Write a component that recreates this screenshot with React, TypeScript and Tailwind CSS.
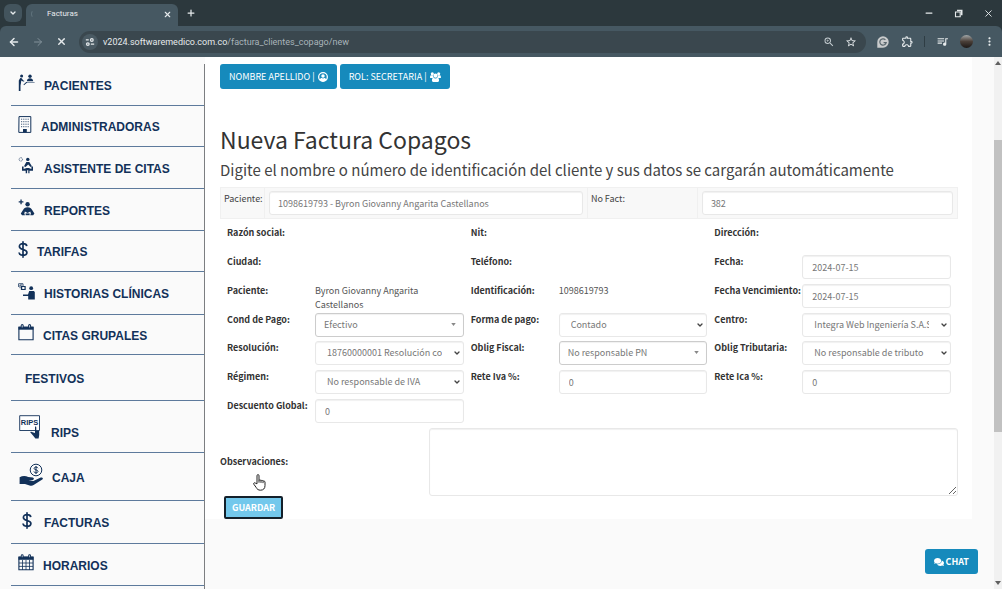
import type { ReactNode } from 'react';
import { ArrowLeft, ArrowRight, ChevronDown, Minus, Plus, X } from 'lucide-react';
import { FaComments } from 'react-icons/fa';
import {
  MdMoreVert,
  MdOutlineExtension,
  MdQueueMusic,
  MdStarBorder,
  MdZoomIn,
} from 'react-icons/md';

/* ---------- Sidebar icons ---------- */

function PatientIcon() {
  return (
    <svg viewBox="0 0 17 17" className="h-[17px] w-[17px]" fill="currentColor">
      <circle cx="3.6" cy="2" r="1.5" />
      <path d="M2.2 4 .8 6.500V17h1.700v-5.500L3 9l.3-2.600 1.700 1.200 1.300-.2-.2-.8-.9-.1L3.800 4.200Z" />
      <circle cx="12" cy="2.2" r="1.7" />
      <path d="M8.800 7.200c.4-2.200 1.400-3 3.200-3s2.800.8 3.200 3Z" />
      <path d="M8.200 7.900h8.400v.7H9.200l-3.200 2.600-.5-.6Z" />
    </svg>
  );
}

function BuildingIcon() {
  return (
    <svg viewBox="0 0 14 17" className="h-[17px] w-[14px]">
      <path d="M1 .6h11.8v15.8H.8Z" fill="#fff" stroke="currentColor" strokeWidth="1" />
      <path d="M3 3.200h8M3 5.700h8M3 8.200h8M3 10.700h8" stroke="currentColor" strokeWidth="1" strokeDasharray="1.200 1" opacity=".8" />
      <path d="M5 13h3.800v3.400H5Z" fill="currentColor" />
    </svg>
  );
}

function AssistantIcon() {
  return (
    <svg viewBox="0 0 17 17" className="h-[17px] w-[17px]" fill="currentColor">
      <circle cx="2.800" cy="2.400" r="1.700" fill="none" stroke="currentColor" strokeWidth=".7" strokeDasharray="1 .5" />
      <circle cx="9.800" cy="2.400" r="1.700" />
      <path d="M6 9.300 8.300 5h3l2.600 4.300-1.300.8-2.400-2.600-2.700 2.600Z" />
      <path d="M4 9.500h1.600V12l3-1h2.200l2.600 1V9.500H15v4.300h-3.500v2.400h-1.200v-2.900H9.100v2.900H7.700v-2.400H4Z" />
    </svg>
  );
}

function ReportIcon() {
  return (
    <svg viewBox="0 0 17 17" className="h-[17px] w-[17px]" fill="currentColor">
      <path d="M2.400.6h1.300v1.700h1.700v1.300H3.700v1.700H2.400V3.600H.7V2.300h1.700Z" />
      <circle cx="9.600" cy="5.200" r="2.200" />
      <path d="M9.600 8.200c2.600 0 3.500.8 4.400 2.600l2.400 3.600-1.200 1.800h-3l.7-1.600-.6-2-2.700 1.400-2.700-1.400-.6 2 .7 1.600H4L2.800 14.400l2.400-3.600c.9-1.800 1.800-2.600 4.400-2.600Z" />
      <path d="M7.600 14.400h4v1.800h-4Z" />
    </svg>
  );
}

function DollarIcon({ className }: { className: string }) {
  return (
    <svg viewBox="0 0 10 17" className={className} fill="none" stroke="currentColor" strokeWidth="1.700">
      <path d="M8.800 5.200C8.600 3.600 7.200 2.700 5 2.700S1.400 3.700 1.400 5.500c0 4 7.500 2 7.500 6 0 1.800-1.600 2.800-3.900 2.800S1.200 13.300 1 11.500M5 .3v16.400" />
    </svg>
  );
}

function HistoryIcon() {
  return (
    <svg viewBox="0 0 18 17" className="h-[17px] w-[18px]" fill="currentColor">
      <path d="M.6 4V.7h4.600M2 5.200V2h4" fill="none" stroke="currentColor" strokeWidth=".8" />
      <path d="M2.900 3h4.800v4H2.900Zm1.300 1v2h2.300V4Z" fillRule="evenodd" />
      <circle cx="13.200" cy="5.200" r="1.900" />
      <path d="M11.200 8h4.600l1 1v7.500h-6.600v-3.600H5v-1.400h5Z" />
    </svg>
  );
}

function CalendarIcon() {
  return (
    <svg viewBox="0 0 16 17" className="h-[17px] w-[16px]">
      <path d="M.9 3.200h14.200v12.600H.9Z" fill="none" stroke="currentColor" strokeWidth="1.100" />
      <path d="M.5 2.700h15v3H.5Z" fill="currentColor" />
      <path d="M4.200 1.600v2M11.600 1.600v2" stroke="currentColor" strokeWidth="3" strokeLinecap="round" />
      <path d="M4.200 1.200v2.200M11.600 1.200v2.200" stroke="#fff" strokeWidth=".8" />
    </svg>
  );
}

function ScheduleIcon() {
  return (
    <svg viewBox="0 0 16 17" className="h-[17px] w-[16px]">
      <path d="M.9 3.200h14.200v12.600H.9Z" fill="none" stroke="currentColor" strokeWidth="1.100" />
      <path d="M.5 2.500h15v3.300H.5Z" fill="currentColor" />
      <path d="M4.200 1.600v2M11.600 1.600v2" stroke="currentColor" strokeWidth="2.800" strokeLinecap="round" />
      <path d="M4.200 1.200v2M11.600 1.200v2" stroke="#fff" strokeWidth=".7" />
      <path d="M4.500 6v10M8 6v10M11.500 6v10M1 9h14M1 12.400h14" stroke="currentColor" strokeWidth=".8" />
    </svg>
  );
}

function RipsIcon() {
  return (
    <svg viewBox="0 0 22 24" className="h-[24px] w-[22px]">
      <path d="M.7.7h19.800v14.800H.7Z" fill="#fff" stroke="currentColor" strokeWidth=".9" />
      <text x="10.600" y="10" fontSize="7.500" fontWeight="700" textAnchor="middle" fill="currentColor" fontFamily="Liberation Sans, sans-serif">
        RIPS
      </text>
      <path d="M16 11.700c.8-.3 1.300 0 1.300.8v3.500h2.900v4l-.6 3.500h-3.200l-2.200-2.800-3-3.400c.6-.8 1.600-.6 2.400 0l2.400.700Z" fill="currentColor" />
    </svg>
  );
}

function CashIcon() {
  return (
    <svg viewBox="0 0 25 24" className="h-[24px] w-[25px]">
      <circle cx="17" cy="7" r="5.800" fill="none" stroke="currentColor" strokeWidth="1" />
      <path d="M19 5.200c-.3-.8-1-1.100-2-1.100s-1.900.4-1.900 1.300c0 2 3.900 1 3.900 3 0 .9-.9 1.400-2 1.400s-1.900-.4-2.100-1.300M17 3v8" fill="none" stroke="currentColor" strokeWidth="1" />
      <path d="M.6 14.300c2.600-1.500 5.800-1.700 8.600-.4l4.600.7c1.500.3 1.500 2.300-.1 2.400l-4.200.3 4.900.6 7.300-3.300c1.700-.7 3 .7 1.600 2L14.600 22c-1.200.8-2.600.9-4 .4L6 20.900H.6Z" fill="currentColor" />
    </svg>
  );
}

/* ---------- Sidebar ---------- */

type NavItem = { label: string; icon?: ReactNode; row: string; text: string };

const navItems: NavItem[] = [
  { label: 'PACIENTES', icon: <PatientIcon />, row: 'h-[42px] items-center pl-[7px]', text: 'ml-[9px]' },
  { label: 'ADMINISTRADORAS', icon: <BuildingIcon />, row: 'h-[41px] items-center pl-[7px]', text: 'ml-[9px]' },
  { label: 'ASISTENTE DE CITAS', icon: <AssistantIcon />, row: 'h-[42px] items-center pl-[7px]', text: 'ml-[9px]' },
  { label: 'REPORTES', icon: <ReportIcon />, row: 'h-[42px] items-center pl-[7px]', text: 'ml-[9px]' },
  { label: 'TARIFAS', icon: <DollarIcon className="h-[17px] w-[10px]" />, row: 'h-[41px] items-center pl-[7px]', text: 'ml-[9px]' },
  { label: 'HISTORIAS CLÍNICAS', icon: <HistoryIcon />, row: 'h-[43px] items-center pl-[7px]', text: 'ml-[8px]' },
  { label: 'CITAS GRUPALES', icon: <CalendarIcon />, row: 'h-[40px] items-center pl-[7px]', text: 'ml-[9px]' },
  { label: 'FESTIVOS', row: 'h-[46px] items-center pl-[14px]', text: '' },
  { label: 'RIPS', icon: <RipsIcon />, row: 'h-[52px] items-end pl-[8px] pb-[9px]', text: 'ml-[10px]' },
  { label: 'CAJA', icon: <CashIcon />, row: 'h-[48px] items-center pl-[8px]', text: 'ml-[8px]' },
  { label: 'FACTURAS', icon: <DollarIcon className="h-[17px] w-[12px]" />, row: 'h-[43px] items-center pl-[10px]', text: 'ml-[11px]' },
  { label: 'HORARIOS', icon: <ScheduleIcon />, row: 'h-[42px] items-center pl-[7px]', text: 'ml-[9px]' },
];

function Sidebar() {
  return (
    <aside className="mt-[7px] w-[205px] shrink-0 border-r border-[#7c7e81] pl-[11px]">
      <nav aria-label="Menú principal">
        <ul>
          {navItems.map((item) => (
            <li key={item.label}>
              <a
                href="#"
                className={`flex border-b border-[#5d7a9c] font-['Liberation_Sans',sans-serif] text-[12px] leading-[20px] font-bold text-[#123159] ${item.row}`}
              >
                {item.icon && <span className="mb-1 shrink-0">{item.icon}</span>}
                <span className={`mt-[2px] ${item.text}`}>{item.label}</span>
              </a>
            </li>
          ))}
        </ul>
      </nav>
    </aside>
  );
}

/* ---------- Browser frame ---------- */

function SiteSettingsIcon() {
  return (
    <svg viewBox="0 0 12 12" className="h-[10px] w-[10px]" fill="none" stroke="currentColor" strokeWidth="1.500">
      <path d="M1 3.500h3.500M7 8.500h4" />
      <circle cx="8.200" cy="3.500" r="1.600" />
      <circle cx="3.400" cy="8.500" r="1.600" />
    </svg>
  );
}

function RestoreIcon() {
  return (
    <svg viewBox="0 0 9 9" className="h-[9px] w-[9px]" fill="none" stroke="currentColor" strokeWidth="1.100">
      <path d="M1.500 3h4.700v4.700H1.500Z" />
      <path d="M3 1.500h4.700v4.700" strokeWidth="1.600" />
    </svg>
  );
}

function GrammarIcon() {
  return (
    <svg viewBox="0 0 12 12" className="h-[12px] w-[12px]">
      <path d="M6 .3a5.700 5.700 0 1 1 0 11.400H.3V6A5.700 5.700 0 0 1 6 .3Z" fill="#c9cbcc" />
      <path d="M8.400 3.800A3.200 3.200 0 1 0 9.200 6.600H6.600" fill="none" stroke="#59666d" strokeWidth="1.200" />
    </svg>
  );
}

function BrowserFrame() {
  return (
    <header className="shrink-0 bg-[#2c383d] font-['Roboto',sans-serif] text-[#e6eaec]">
      <div className="flex h-[26px] items-center pl-1">
        <button type="button" aria-label="Buscar pestañas" className="grid h-[18px] w-[18px] place-items-center rounded-md bg-[#43545d]">
          <ChevronDown size={8} strokeWidth={4} />
        </button>
        <div className="ml-1 flex h-[22px] w-[152px] items-center self-end rounded-t-md bg-[#465862] pr-[6px] pb-[2px] pl-[5px]">
          <span className="h-2 w-2 rounded-full border border-transparent border-l-[#5f727c]" />
          <span className="ml-2 flex-1 text-[8px] leading-[12px]">Facturas</span>
          <button type="button" aria-label="Cerrar pestaña">
            <X size={9} strokeWidth={3} />
          </button>
        </div>
        <button type="button" aria-label="Nueva pestaña" className="ml-2">
          <Plus size={10} strokeWidth={3} />
        </button>
        <div className="ml-auto flex items-center gap-5 pr-2">
          <button type="button" aria-label="Minimizar">
            <Minus size={10} strokeWidth={3} />
          </button>
          <button type="button" aria-label="Restaurar">
            <RestoreIcon />
          </button>
          <button type="button" aria-label="Cerrar">
            <X size={11} strokeWidth={2} />
          </button>
        </div>
      </div>
      <div className="flex h-[31px] items-center rounded-t-md bg-[#465862] pl-2">
        <div className="flex w-[71px] items-center gap-3">
          <button type="button" aria-label="Atrás">
            <ArrowLeft size={12} strokeWidth={3} />
          </button>
          <button type="button" aria-label="Adelante" className="text-[#82919a]">
            <ArrowRight size={12} strokeWidth={2} />
          </button>
          <button type="button" aria-label="Detener">
            <X size={11} strokeWidth={3} />
          </button>
        </div>
        <div className="flex h-[22px] flex-1 items-center rounded-full bg-[#3a474e] pr-[9px] pl-[3px]">
          <span className="grid h-4 w-4 place-items-center rounded-full bg-[#4a5a63]">
            <SiteSettingsIcon />
          </span>
          <span className="ml-[5px] flex-1 text-[9px] leading-[14px] text-[#a9b4ba]">
            <span className="text-[#e6eaec]">v2024.softwaremedico.com.co</span>/factura_clientes_copago/new
          </span>
          <MdZoomIn size={12} className="text-[#c3cbcf]" />
          <MdStarBorder size={12} className="ml-[10px]" />
        </div>
        <div className="ml-[11px] flex items-center">
          <GrammarIcon />
          <MdOutlineExtension size={13} className="ml-3" />
          <span className="ml-[10px] h-[11px] w-px bg-[#2f3d44]" />
          <MdQueueMusic size={13} className="ml-[11px]" />
          <span className="ml-[11px] h-[13px] w-[13px] rounded-full bg-linear-to-b from-[#a3a9ab] via-[#4a3f38] to-[#1d1816]" />
          <MdMoreVert size={13} className="mr-[6px] ml-[10px]" />
        </div>
      </div>
    </header>
  );
}

/* ---------- Form ---------- */

const control =
  'block h-6 w-full rounded-[3px] border bg-white text-[9px] leading-[14px] text-[#777] shadow-[inset_0_1px_1px_rgba(0,0,0,0.06)] outline-none';

type FieldProps = {
  id: string;
  label: string;
  kind?: 'static' | 'input' | 'select' | 'picker';
  value?: string;
};

function FieldControl({ id, kind, value }: FieldProps) {
  if (kind === 'input') {
    return <input id={id} type="text" defaultValue={value} className={`${control} border-[#e8e8e8] px-[9px]`} />;
  }
  if (kind === 'select') {
    return (
      <div className="relative">
        <select id={id} className={`${control} appearance-none border-[#e8e8e8] pr-[21px] pl-[11px]`}>
          <option>{value}</option>
        </select>
        <ChevronDown size={8} strokeWidth={4} className="pointer-events-none absolute top-2 right-[3px] text-[#444]" />
      </div>
    );
  }
  if (kind === 'picker') {
    return (
      <div className="relative">
        <select id={id} className={`${control} appearance-none border-[#cccccc] pr-5 pl-2`}>
          <option>{value}</option>
        </select>
        <svg viewBox="0 0 6 4" className="pointer-events-none absolute top-[10px] right-2 h-[3px] w-[5px]">
          <path d="M0 0h6L3 4Z" fill="#888" />
        </svg>
      </div>
    );
  }
  return (
    <output id={id} className="block text-[9px] leading-[14px] text-[#555]">
      {value}
    </output>
  );
}

function Field(props: FieldProps) {
  return (
    <div className="grid grid-cols-[88px_1fr] pl-[7px]">
      <label htmlFor={props.id} className="text-[9px] leading-[14px] font-bold whitespace-nowrap text-[#333]">
        {props.label}
      </label>
      <FieldControl {...props} />
    </div>
  );
}

const fields: FieldProps[] = [
  { id: 'razon', label: 'Razón social:' },
  { id: 'nit', label: 'Nit:' },
  { id: 'direccion', label: 'Dirección:' },
  { id: 'ciudad', label: 'Ciudad:' },
  { id: 'telefono', label: 'Teléfono:' },
  { id: 'fecha', label: 'Fecha:', kind: 'input', value: '2024-07-15' },
  { id: 'paciente', label: 'Paciente:', value: 'Byron Giovanny Angarita Castellanos' },
  { id: 'identificacion', label: 'Identificación:', value: '1098619793' },
  { id: 'vencimiento', label: 'Fecha Vencimiento:', kind: 'input', value: '2024-07-15' },
  { id: 'cond', label: 'Cond de Pago:', kind: 'picker', value: 'Efectivo' },
  { id: 'forma', label: 'Forma de pago:', kind: 'select', value: 'Contado' },
  { id: 'centro', label: 'Centro:', kind: 'select', value: 'Integra Web Ingeniería S.A.S.' },
  { id: 'resolucion', label: 'Resolución:', kind: 'select', value: '18760000001 Resolución con' },
  { id: 'fiscal', label: 'Oblig Fiscal:', kind: 'picker', value: 'No responsable PN' },
  { id: 'tributaria', label: 'Oblig Tributaria:', kind: 'select', value: 'No responsable de tributo' },
  { id: 'regimen', label: 'Régimen:', kind: 'select', value: 'No responsable de IVA' },
  { id: 'iva', label: 'Rete Iva %:', kind: 'input', value: '0' },
  { id: 'ica', label: 'Rete Ica %:', kind: 'input', value: '0' },
  { id: 'descuento', label: 'Descuento Global:', kind: 'input', value: '0' },
];

function HandCursor() {
  return (
    <svg viewBox="0 0 13 17" className="pointer-events-none absolute -top-[22px] left-[33px] h-[17px] w-[13px]" fill="#fff" stroke="#222" strokeWidth="1" strokeLinejoin="round">
      <path d="M4 9.800V1.700C4 .2 6 .2 6 1.700v4.800c.2-1 1.900-.8 2 .3.300-.9 1.900-.6 2 .5.500-.7 1.900-.4 2 .8v3.400c0 3-1.600 4.700-4.500 4.700-2.300 0-3.400-1-4.300-2.700L.8 10.200c-.6-1.100.6-1.900 1.500-1.100Z" />
      <path d="M6 6.500v2.200M8 6.900v2M10 7.400v1.700" fill="none" />
    </svg>
  );
}

function UserCircleIcon() {
  return (
    <svg viewBox="0 0 12 12" className="h-[10px] w-[10px]">
      <circle cx="6" cy="6" r="5.200" fill="none" stroke="currentColor" strokeWidth="1.500" />
      <circle cx="6" cy="4.900" r="2.100" fill="currentColor" />
      <path d="M2 9.300c.7-1.700 1.700-2.100 2.500-2.100.9.600 2.100.6 3 0 .8 0 1.800.4 2.500 2.100-2 2.700-6 2.700-8 0Z" fill="currentColor" />
    </svg>
  );
}

function GroupIcon() {
  return (
    <svg viewBox="0 0 12 11" className="h-[10px] w-[11px]" fill="currentColor">
      <circle cx="2.500" cy="2" r="1.700" />
      <circle cx="9.500" cy="2" r="1.700" />
      <circle cx="6" cy="4" r="2.300" />
      <path d="M0 6.200C0 4.600.5 3.700 1 3.700h2.200c0 1.400.4 2.200 1 2.800H.8C.3 6.500 0 6.400 0 6.200ZM12 6.200c0-1.600-.5-2.500-1-2.500H8.800c0 1.400-.4 2.200-1 2.800h3.400c.5 0 .8-.1.8-.3Z" />
      <path d="M3.600 6.300c1.500 1 3.300 1 4.800 0 1.100.2 1.500 1.400 1.500 3 0 1-.5 1.600-1.400 1.600h-5c-.9 0-1.400-.6-1.400-1.600 0-1.600.4-2.800 1.500-3Z" />
    </svg>
  );
}

function InvoicePanel() {
  return (
    <main className="bg-white pr-[14px] pl-[15px]">
      <div className="flex gap-[3px] pt-[7px] text-[9px] leading-[14px] text-white">
        <button type="button" className="flex h-[25px] items-center gap-[3px] rounded-[3px] bg-[#168abc] px-[9px]">
          NOMBRE APELLIDO | <UserCircleIcon />
        </button>
        <button type="button" className="flex h-[25px] items-center gap-[3px] rounded-[3px] bg-[#168abc] px-[9px]">
          ROL: SECRETARIA | <GroupIcon />
        </button>
      </div>

      <h1 className="mt-[34px] text-[23px] leading-[32px] text-[#333]">Nueva Factura Copagos</h1>
      <h2 className="mt-[3px] text-[15px] leading-[24px] text-[#444]">
        Digite el nombre o número de identificación del cliente y sus datos se cargarán automáticamente
      </h2>

      <form onSubmit={(event) => event.preventDefault()}>
        <div className="mt-[5px] grid h-[32px] grid-cols-[44px_324fr_110px_260fr] divide-x divide-[#f0f0f0] border border-[#f0f0f0] bg-[#f8f8f8] text-[9px] leading-[14px] text-[#444]">
          <label htmlFor="cliente" className="pt-1 pl-[3px]">
            Paciente:
          </label>
          <div className="px-1 py-[3px]">
            <input id="cliente" type="text" defaultValue="1098619793 - Byron Giovanny Angarita Castellanos" className={`${control} border-[#e8e8e8] px-2`} />
          </div>
          <label htmlFor="factura" className="pt-1 pl-[3px]">
            No Fact:
          </label>
          <div className="px-1 py-[3px]">
            <input id="factura" type="text" defaultValue="382" className={`${control} border-[#e8e8e8] px-2`} />
          </div>
        </div>

        <div className="mt-[7px] grid grid-cols-3 grid-rows-[29px_29px_29px_28px_29px_29px_29px] pr-[7px]">
          {fields.map((field) => (
            <Field key={field.id} {...field} />
          ))}
        </div>

        <div className="grid grid-cols-[209px_1fr] items-center">
          <label htmlFor="observaciones" className="text-[9px] leading-[14px] font-bold text-[#333]">
            Observaciones:
          </label>
          <textarea
            id="observaciones"
            className="block h-[68px] w-full rounded-[3px] border border-[#e8e8e8] bg-white text-[9px] text-[#777] shadow-[inset_0_1px_1px_rgba(0,0,0,0.06)] outline-none"
          />
        </div>

        <div className="relative">
          <button
            type="submit"
            className="ml-1 block h-[23px] rounded-[2px] border-2 border-[#14202a] bg-[#73c8ec] px-[6px] text-[9px] leading-[14px] font-bold text-white"
          >
            GUARDAR
          </button>
          <HandCursor />
        </div>
      </form>
    </main>
  );
}

function PageScrollbar() {
  return (
    <div aria-hidden="true" className="flex w-2 shrink-0 flex-col items-center bg-[#f1f1f1]">
      <svg viewBox="0 0 6 4" className="mt-1 h-1 w-[6px]">
        <path d="M0 4h6L3 0Z" fill="#606060" />
      </svg>
      <span className="grow-[75]" />
      <span className="w-full grow-[293] bg-[#c1c1c1]" />
      <span className="grow-[149]" />
      <svg viewBox="0 0 6 4" className="mb-1 h-1 w-[6px]">
        <path d="M0 0h6L3 4Z" fill="#606060" />
      </svg>
    </div>
  );
}

export default function App() {
  return (
    <div className="relative flex min-h-screen flex-col bg-[#fafafa] font-['Noto_Sans_CJK_SC',sans-serif]">
      <BrowserFrame />
      <div className="flex flex-1">
        <Sidebar />
        <div className="min-w-0 flex-1 pr-[22px]">
          <InvoicePanel />
        </div>
        <PageScrollbar />
      </div>
      <button
        type="button"
        className="absolute right-6 bottom-[15px] flex h-[25px] items-center gap-[2px] rounded-[3px] bg-[#168abc] px-[9px] text-[9px] leading-[14px] font-bold text-white"
      >
        <FaComments size={10} /> CHAT
      </button>
    </div>
  );
}
